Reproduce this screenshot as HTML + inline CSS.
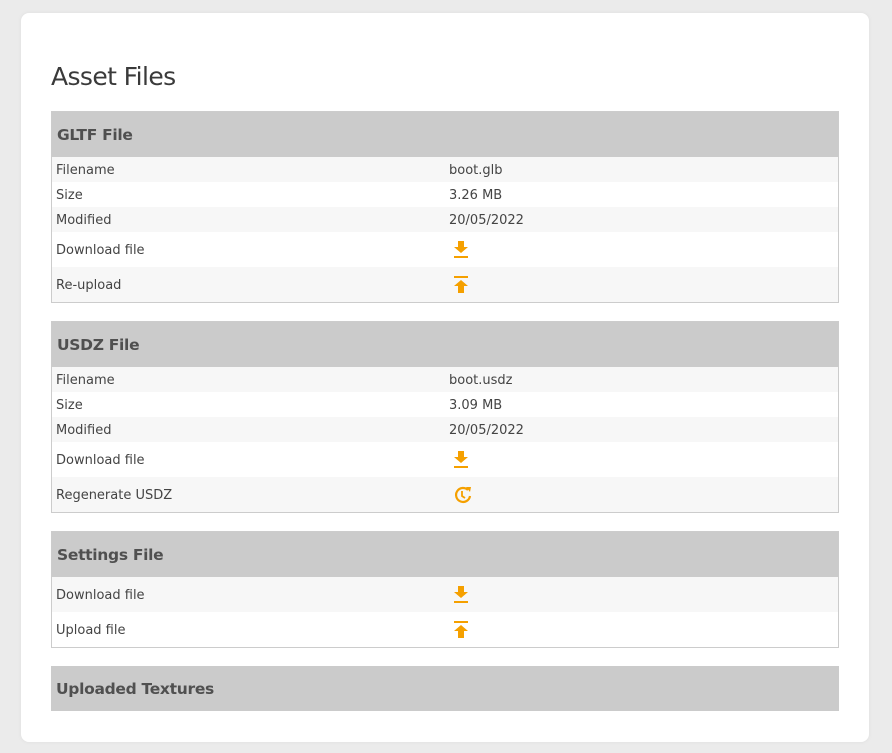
<!DOCTYPE html>
<html><head><style>
body{margin:0;background:#ebebeb;font-family:"DejaVu Sans","Liberation Sans",sans-serif;}
.card{position:absolute;left:21px;top:13px;width:848px;height:729px;background:#fff;border-radius:8px;box-shadow:0 0 4px rgba(0,0,0,0.06)}
h1{position:absolute;left:30px;top:49px;margin:0;font:400 25px "DejaVu Sans","Liberation Sans",sans-serif;color:#3a3a3a;letter-spacing:-0.6px}
table{position:absolute;left:30px;width:788px;border-collapse:collapse;border:1px solid #ccc;font-size:13px;color:#444}
th{background:#cbcbcb;height:44px;text-align:left;padding:1px 0 0 5px;font-size:15.5px;color:#505050;font-weight:bold;letter-spacing:-0.3px}
td{padding:1px 0 0 4px;height:24px}
td:first-child{width:389px}
tr.t td{height:34px}
tbody tr:nth-child(odd){background:#f7f7f7}
svg{display:block;margin-left:4px}
</style></head><body>
<div class="card">
<h1>Asset Files</h1>
<table style="top:98px"><thead><tr><th colspan=2>GLTF File</th></tr></thead><tbody>
<tr><td>Filename</td><td>boot.glb</td></tr>
<tr><td>Size</td><td>3.26 MB</td></tr>
<tr><td>Modified</td><td>20/05/2022</td></tr>
<tr class=t><td>Download file</td><td><svg width="16" height="18"><path d="M5 0h6v6h4l-7 6-7-6h4z" fill="#f5a000"/><rect x="1" y="15" width="14" height="2" fill="#f5a000"/></svg></td></tr>
<tr class=t><td>Re-upload</td><td><svg width="16" height="18"><rect x="1" y="0" width="14" height="2" fill="#f5a000"/><path d="M8 4l7 6h-4v7h-6v-7h-4z" fill="#f5a000"/></svg></td></tr>
</tbody></table>
<table style="top:308px"><thead><tr><th colspan=2>USDZ File</th></tr></thead><tbody>
<tr><td>Filename</td><td>boot.usdz</td></tr>
<tr><td>Size</td><td>3.09 MB</td></tr>
<tr><td>Modified</td><td>20/05/2022</td></tr>
<tr class=t><td>Download file</td><td><svg width="16" height="18"><path d="M5 0h6v6h4l-7 6-7-6h4z" fill="#f5a000"/><rect x="1" y="15" width="14" height="2" fill="#f5a000"/></svg></td></tr>
<tr class=t><td>Regenerate USDZ</td><td><svg width="20" height="20"><path d="M15 5A7 7 0 1 0 17 11" fill="none" stroke="#f5a000" stroke-width="2.2"/><path d="M13 2l5 0-1 5z" fill="#f5a000"/><path d="M9 6v5l3 2" fill="none" stroke="#f5a000" stroke-width="1.8"/></svg></td></tr>
</tbody></table>
<table style="top:518px"><thead><tr><th colspan=2>Settings File</th></tr></thead><tbody>
<tr class=t><td>Download file</td><td><svg width="16" height="18"><path d="M5 0h6v6h4l-7 6-7-6h4z" fill="#f5a000"/><rect x="1" y="15" width="14" height="2" fill="#f5a000"/></svg></td></tr>
<tr class=t style="background:#fff"><td>Upload file</td><td><svg width="16" height="18"><rect x="1" y="0" width="14" height="2" fill="#f5a000"/><path d="M8 4l7 6h-4v7h-6v-7h-4z" fill="#f5a000"/></svg></td></tr>
</tbody></table>
<table style="top:653px;border:none"><thead><tr><th colspan=2>Uploaded Textures</th></tr></thead></table>
</div>
</body></html>
